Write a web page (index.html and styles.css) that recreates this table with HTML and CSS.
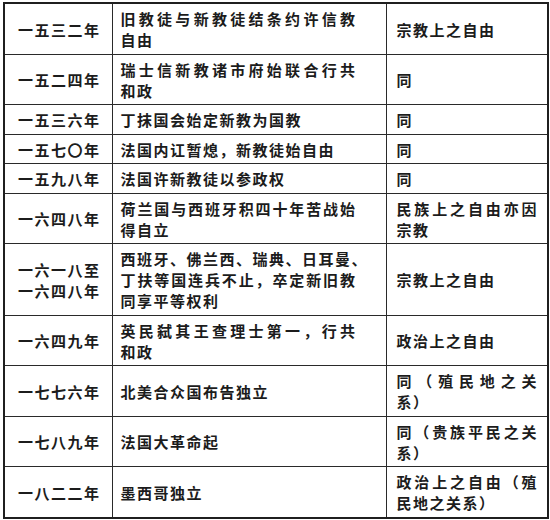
FILE: index.html
```html
<!DOCTYPE html>
<html lang="zh">
<head>
<meta charset="utf-8">
<title>宗教与政治自由年表</title>
<link rel="stylesheet" href="styles.css">
</head>
<body>
<table class="chron">
  <colgroup>
    <col class="c-year">
    <col class="c-event">
    <col class="c-kind">
  </colgroup>
  <tbody>
    <tr>
      <td class="year">一五三二年</td>
      <td class="event"><span class="ln j">旧教徒与新教徒结条约许信教</span><span class="ln">自由</span></td>
      <td class="kind">宗教上之自由</td>
    </tr>
    <tr>
      <td class="year">一五二四年</td>
      <td class="event"><span class="ln j">瑞士信新教诸市府始联合行共</span><span class="ln">和政</span></td>
      <td class="kind">同</td>
    </tr>
    <tr>
      <td class="year">一五三六年</td>
      <td class="event">丁抹国会始定新教为国教</td>
      <td class="kind">同</td>
    </tr>
    <tr>
      <td class="year">一五七〇年</td>
      <td class="event">法国内讧暂熄，新教徒始自由</td>
      <td class="kind">同</td>
    </tr>
    <tr>
      <td class="year">一五九八年</td>
      <td class="event">法国许新教徒以参政权</td>
      <td class="kind">同</td>
    </tr>
    <tr>
      <td class="year">一六四八年</td>
      <td class="event"><span class="ln j">荷兰国与西班牙积四十年苦战始</span><span class="ln">得自立</span></td>
      <td class="kind"><span class="ln j">民族上之自由亦因</span><span class="ln">宗教</span></td>
    </tr>
    <tr>
      <td class="year"><span class="ln">一六一八至</span><span class="ln">一六四八年</span></td>
      <td class="event"><span class="ln j">西班牙、佛兰西、瑞典、日耳曼、</span><span class="ln j">丁扶等国连兵不止，卒定新旧教</span><span class="ln">同享平等权利</span></td>
      <td class="kind">宗教上之自由</td>
    </tr>
    <tr>
      <td class="year">一六四九年</td>
      <td class="event"><span class="ln j">英民弑其王查理士第一，行共</span><span class="ln">和政</span></td>
      <td class="kind">政治上之自由</td>
    </tr>
    <tr>
      <td class="year">一七七六年</td>
      <td class="event">北美合众国布告独立</td>
      <td class="kind"><span class="ln j">同（殖民地之关</span><span class="ln">系）</span></td>
    </tr>
    <tr>
      <td class="year">一七八九年</td>
      <td class="event">法国大革命起</td>
      <td class="kind"><span class="ln j">同（贵族平民之关</span><span class="ln">系）</span></td>
    </tr>
    <tr>
      <td class="year">一八二二年</td>
      <td class="event">墨西哥独立</td>
      <td class="kind"><span class="ln j">政治上之自由（殖</span><span class="ln">民地之关系）</span></td>
    </tr>
  </tbody>
</table>
</body>
</html>
```

FILE: styles.css
```css
html, body {
  margin: 0;
  padding: 0;
  background: #ffffff;
}

body {
  padding: 2px 0 0 3px;
  font-family: "Noto Sans CJK SC", "Noto Sans CJK JP", sans-serif;
  font-size: 15px;
  font-weight: 700;
  color: #1c1c1c;
}

.chron {
  border-collapse: collapse;
  table-layout: fixed;
  width: 544px;
  border: 2px solid #1f1f1f;
}

.c-year { width: 108px; }
.c-event { width: 274px; }
.c-kind { width: 162px; }

.chron td {
  border: 1px solid #2a2a2a;
  vertical-align: middle;
  line-height: 21px;
  letter-spacing: 1.5px;
  padding: 4px 0 3.5px;
  white-space: nowrap;
}

.chron td.year {
  text-align: center;
  padding-left: 2px;
}

.chron td.event {
  padding-left: 8px;
  padding-right: 29px;
}

.chron td.kind {
  padding-left: 10px;
  padding-right: 9px;
}

.ln {
  display: block;
}

.j {
  text-align: justify;
  text-align-last: justify;
}
```
